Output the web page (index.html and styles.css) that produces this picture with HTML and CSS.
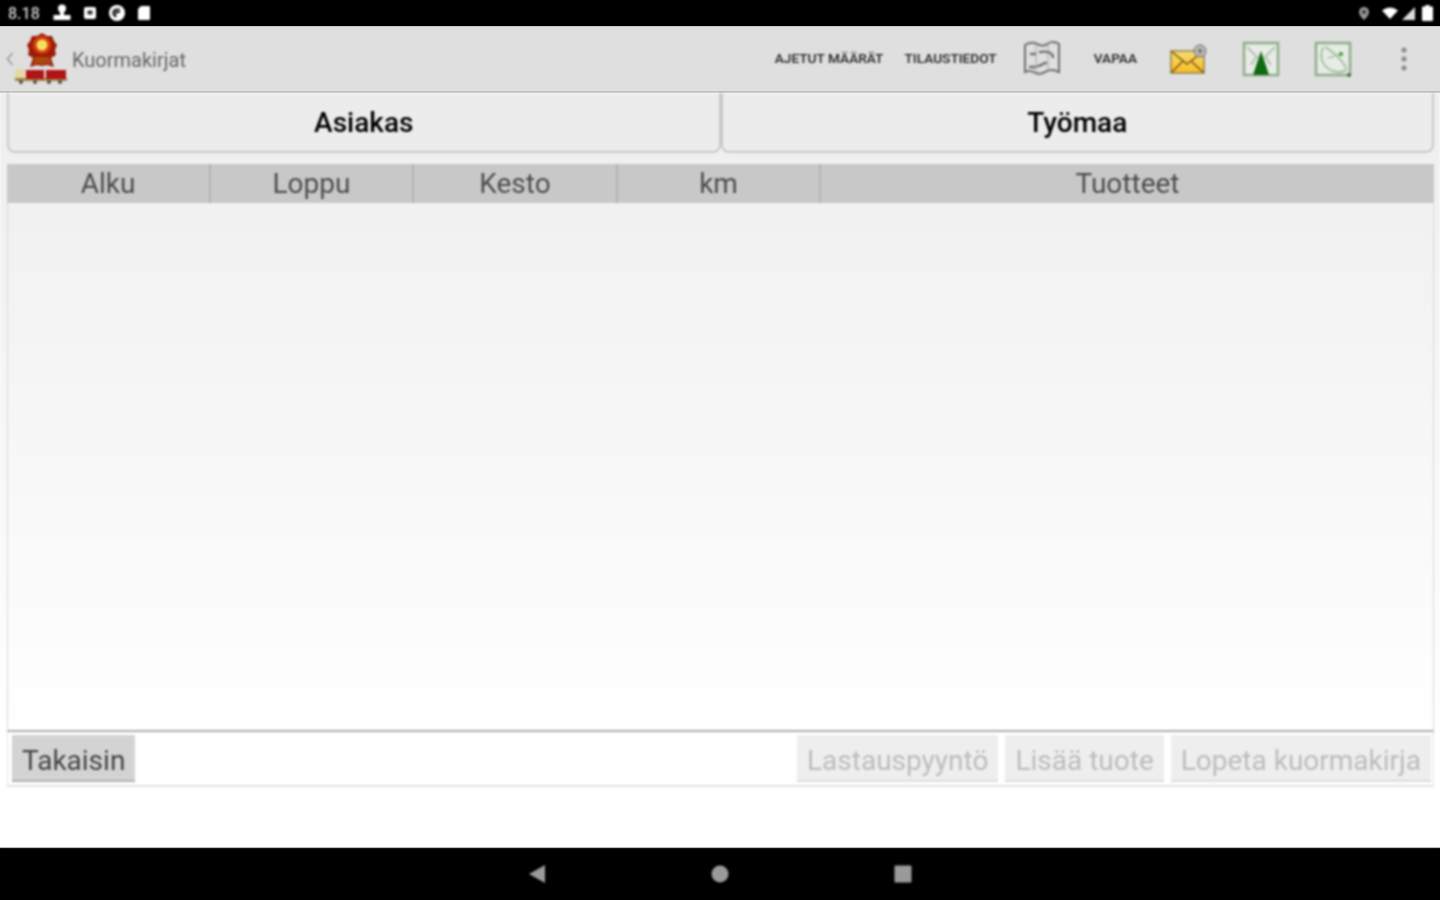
FILE: index.html
```html
<!DOCTYPE html>
<html lang="en">
<head>
  <meta charset="UTF-8" />
  <meta name="viewport" content="width=device-width, initial-scale=1.0"/>
  <title>Kuormakirjat</title>
  <link rel="stylesheet" href="styles.css">
</head>
<body>
  <div class="screen">
    <div class="statusbar">
      <div class="status-left">
        <span class="clock">8.18</span>
        <svg class="st-person" width="20" height="20" viewBox="0 0 20 20"><circle cx="10" cy="5.500" r="4" fill="#fff"/><path d="M8 9h4v3h6.500v5h-17v-5H8z" fill="#fff"/></svg>
        <svg class="st-gap" width="14" height="14" viewBox="0 0 14 14"><rect x="1" y="1" width="12" height="12" rx="2" fill="#fff"/><rect x="4.500" y="4.500" width="5" height="4" fill="#333"/></svg>
        <svg class="st-gap" width="18" height="18" viewBox="0 0 18 18"><circle cx="9" cy="9" r="8" fill="#fff"/><path d="M12 5.500H8.500a3.500 3.500 0 0 0-1 6.800V8h4.500" fill="none" stroke="#222" stroke-width="1.800"/></svg>
        <svg class="st-gap" width="14" height="16" viewBox="0 0 14 16"><path d="M4 1h8a1 1 0 0 1 1 1v12a1 1 0 0 1-1 1H2a1 1 0 0 1-1-1V4z" fill="#fff"/></svg>
      </div>
      <div class="status-right">
        <svg width="12" height="15" viewBox="0 0 12 15"><path d="M6 1a5 5 0 0 1 5 5c0 3-3 6-5 8-2-2-5-5-5-8a5 5 0 0 1 5-5z" fill="#999"/><circle cx="6" cy="6" r="2" fill="#333"/></svg>
        <svg class="wifi" width="16" height="12" viewBox="0 0 16 12"><path d="M0 3.500Q8-2.500 16 3.500L8 12z" fill="#fff"/></svg>
        <svg class="signal" width="13" height="13" viewBox="0 0 13 13"><path d="M13 0v13H0z" fill="#ddd"/></svg>
        <svg class="batt" width="11" height="16" viewBox="0 0 11 16"><path d="M3.500 0h4v1.500H10a1 1 0 0 1 1 1V15a1 1 0 0 1-1 1H1a1 1 0 0 1-1-1V2.500a1 1 0 0 1 1-1h2.500z" fill="#fff"/></svg>
      </div>
    </div>

    <div class="appbar">
      <div class="app-title">
        <svg class="back" width="8" height="16" viewBox="0 0 8 16"><path d="M6.500 2 1.500 8l5 6" fill="none" stroke="#999" stroke-width="1.500"/></svg>
        <svg class="logo" width="54" height="54" viewBox="0 0 54 54">
          <path d="M28 1l5 3 5 0 2 5 3 4-2 5 1 5-5 3 3 9-7-2-5 1-5-1-7 2 3-9-5-3 1-5-2-5 3-4 2-5 5 0z" fill="#9c1c08"/>
          <path d="M21 25l-2 8 5-2 4 2 4-2 5 2-2-8z" fill="#a84a10"/>
          <circle cx="28" cy="13" r="9" fill="#d8400f"/>
          <circle cx="28" cy="13" r="5.500" fill="#f6e060"/>
          <rect x="1" y="37" width="10" height="12" fill="#e4d8a4"/>
          <rect x="1" y="46" width="52" height="3" fill="#a88448"/>
          <rect x="12" y="38" width="18" height="9" fill="#b01414"/>
          <rect x="32" y="38" width="20" height="9" fill="#b01414"/>
          <circle cx="7" cy="50" r="2" fill="#4c4c40"/><circle cx="21" cy="50" r="2" fill="#4c4c40"/><circle cx="35" cy="50" r="2" fill="#4c4c40"/><circle cx="46" cy="50" r="2" fill="#4c4c40"/>
        </svg>
        <span class="title">Kuormakirjat</span>
      </div>
      <div class="actions">
        <span class="act act-first">AJETUT MÄÄRÄT</span>
        <span class="act act-second">TILAUSTIEDOT</span>
        <svg class="ico-map" width="38" height="38" viewBox="0 0 38 38"><path d="M2 5c5-3 8-3 12-1s8 2 10 0 7-3 12 0v28c-4-2-8-3-12-1s-7 4-11 2-7-3-11-1z" fill="none" stroke="#707070" stroke-width="2"/><path d="M13 4v29M25 4v27" fill="none" stroke="#a8a8a8" stroke-width="1"/><path d="M8 14h4M7 27h5M15 26c4 0 4-3 8-3M17 12c6-1 12 0 13 5" fill="none" stroke="#707070" stroke-width="2.500" stroke-linecap="round"/></svg>
        <span class="act act-free">VAPAA</span>
        <svg class="ico-mail" width="38" height="30" viewBox="0 0 38 30"><defs><linearGradient id="mailfill" x1="0" y1="0" x2="0" y2="1"><stop offset="0" stop-color="#f6dc70"/><stop offset="1" stop-color="#f8bc24"/></linearGradient></defs><rect x="1" y="7" width="33" height="22" fill="url(#mailfill)" stroke="#6b5a20"/><path d="M1 7l16 13L34 7M1 29l12-12M34 29L21 17" fill="none" stroke="#7a5a10" stroke-width="1.500"/><circle cx="30" cy="7" r="6" fill="#bbb" stroke="#666"/><path d="M27 7h6M30 4v6" stroke="#555"/></svg>
        <svg class="ico-tower" width="38" height="36" viewBox="0 0 38 36"><rect x="2" y="2" width="34" height="32" fill="#e8ebe6" stroke="#8fae8a" stroke-width="2.500"/><path d="M5 6l11 11M33 6L22 17M9 24l6-9M29 24l-6-9" fill="none" stroke="#b4c2b2" stroke-width="2"/><path d="M19 10l8 24H11z" fill="#0f6a12"/></svg>
        <svg class="ico-radar" width="38" height="36" viewBox="0 0 38 36"><rect x="2" y="2" width="34" height="32" fill="#e8ebe6" stroke="#8fae8a" stroke-width="2.500"/><path d="M9 6c-4 10-1 20 10 24 6 2 11 1 14-2M11 6c6 3 17 12 21 21" fill="none" stroke="#a6c4a2" stroke-width="2"/><path d="M14 17l14-4" stroke="#a6c4a2" stroke-width="1.500"/><circle cx="27" cy="13" r="2.200" fill="#48a852"/><circle cx="35" cy="34" r="1.800" fill="#3c5a30"/></svg>
        <svg class="ico-more" width="6" height="26" viewBox="0 0 6 26"><circle cx="3" cy="4" r="2.500" fill="#8a8a8a"/><circle cx="3" cy="13" r="2.500" fill="#8a8a8a"/><circle cx="3" cy="22" r="2.500" fill="#8a8a8a"/></svg>
      </div>
    </div>

    <div class="content">
      <div class="tabs">
        <div class="tab">Asiakas</div>
        <div class="tab">Työmaa</div>
      </div>

      <div class="list-head">
        <div class="col">Alku</div>
        <div class="col">Loppu</div>
        <div class="col">Kesto</div>
        <div class="col">km</div>
        <div class="col col-wide">Tuotteet</div>
      </div>
      <div class="list-body"></div>
      <div class="footer">
        <button class="btn btn-back">Takaisin</button>
        <div class="footer-right">
          <button class="btn btn-off">Lastauspyyntö</button>
          <button class="btn btn-off">Lisää tuote</button>
          <button class="btn btn-off">Lopeta kuormakirja</button>
        </div>
      </div>
    </div>

    <div class="navbar">
      <svg width="18" height="20" viewBox="0 0 18 20"><path d="M17 1v18L1 10z" fill="#9a9a9a"/></svg>
      <svg width="18" height="18" viewBox="0 0 18 18"><circle cx="9" cy="9" r="8.500" fill="#9a9a9a"/></svg>
      <svg width="18" height="18" viewBox="0 0 18 18"><rect x="0.500" y="0.500" width="17" height="17" rx="1" fill="#9a9a9a"/></svg>
    </div>
  </div>
</body>
</html>
```

FILE: styles.css
```css
html, body {
  margin: 0;
  padding: 0;
  background: #fff;
}
body {
  font-family: 'Roboto', 'Liberation Sans', sans-serif;
  overflow: hidden;
}
.screen {
  width: 1440px;
  height: 900px;
  display: flex;
  flex-direction: column;
}

/* the source is a soft, upscaled capture */
.status-left, .status-right, .app-title, .actions, .content, .navbar svg {
  filter: blur(0.8px);
}

/* status bar */
.statusbar {
  height: 26px;
  background: #000;
  display: flex;
  justify-content: space-between;
  align-items: center;
  padding: 0 7px 0 8px;
  flex: none;
}
.status-left, .status-right {
  display: flex;
  align-items: center;
}
.clock {
  color: #ccc;
  font-size: 16px;
  font-weight: 500;
  width: 43px;
}
.st-person {
  margin-left: 1px;
}
.st-gap {
  margin-left: 11px;
}
.wifi {
  margin-left: 12px;
}
.signal {
  margin-left: 4px;
}
.batt {
  margin-left: 7px;
}

/* app bar */
.appbar {
  height: 64px;
  background: #dfdfdf;
  border-bottom: 2px solid #bdbdbd;
  border-top: 1px solid #c8c8c8;
  display: flex;
  justify-content: space-between;
  align-items: center;
  flex: none;
}
.app-title {
  display: flex;
  align-items: center;
}
.back {
  margin-left: 6px;
}
.title {
  font-size: 20px;
  color: #666;
  margin: 2px 0 0 4px;
}
.actions {
  display: flex;
  align-items: center;
  padding-right: 33px;
}
.act {
  font-size: 13.7px;
  font-weight: 500;
  color: #222;
  white-space: nowrap;
  margin-bottom: 2px;
}
.act-first {
  margin-right: 21px;
}
.act-second {
  margin-right: 26px;
}
.act-free {
  margin-left: 33px;
  margin-right: 33px;
}
.ico-tower {
  margin-left: 34px;
}
.ico-radar {
  margin-left: 34px;
}
.ico-more {
  margin-left: 49px;
}

/* content */
.content {
  flex: 1;
  padding: 0 6px 60px 7px;
  background: linear-gradient(#eeeeee, #ffffff 640px);
  display: flex;
  flex-direction: column;
}
.tabs {
  display: flex;
  height: 60px;
  margin-bottom: 11px;
  flex: none;
}
.tab {
  flex: 1;
  background: #ececec;
  border: 2px solid #c9c9c9;
  border-top: none;
  border-radius: 0 0 8px 8px;
  display: flex;
  align-items: center;
  justify-content: center;
  font-size: 28px;
  font-weight: 500;
  color: #000;
}
.list-head {
  height: 39px;
  background: #c8c8c8;
  display: grid;
  grid-template-columns: 204px 203px 204px 203px 1fr;
  flex: none;
}
.col {
  display: flex;
  align-items: center;
  justify-content: center;
  font-size: 28px;
  color: #4c4c4c;
  border-right: 2px solid #b4b4b4;
}
.col-wide {
  border-right: none;
}
.list-body {
  flex: 1;
  border: solid #d8d8d8;
  border-width: 0 1px;
  border-bottom: 2px solid #adadad;
}
.footer {
  height: 55px;
  box-sizing: border-box;
  display: flex;
  justify-content: space-between;
  align-items: center;
  background: #fff;
  border: solid #e2e2e2;
  border-width: 0 1px 2px;
  padding: 0 2px 0 4px;
  flex: none;
}
.footer-right {
  display: flex;
  gap: 7px;
}
.btn {
  height: 47px;
  border: none;
  border-bottom: 2px solid #ddd;
  padding: 5px 10px 0;
  font-family: inherit;
  font-size: 28px;
}
.btn-back {
  background: #d3d3d3;
  color: #444;
  border-bottom-color: #b0b0b0;
}
.btn-off {
  background: #eeeeee;
  color: #bcbcbc;
}

/* nav bar */
.navbar {
  height: 52px;
  background: #000;
  border-top: 1px solid #999;
  display: flex;
  justify-content: center;
  align-items: center;
  gap: 165px;
  flex: none;
}
```
